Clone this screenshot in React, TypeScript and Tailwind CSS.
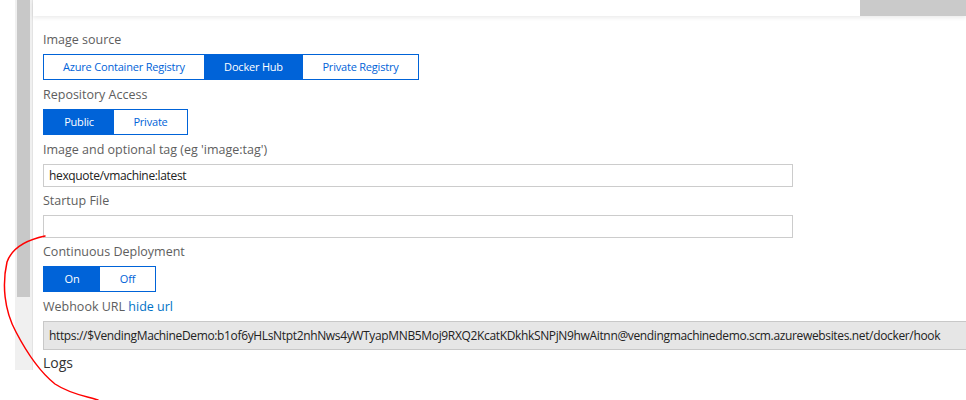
const font = "font-['Open_Sans','Noto_Sans',sans-serif]";

type Segment = { label: string; width: string; active?: boolean };

const imageSources: Segment[] = [
  { label: "Azure Container Registry", width: "w-[160px]" },
  { label: "Docker Hub", width: "w-[99px]", active: true },
  { label: "Private Registry", width: "w-[115px]" },
];

const accessOptions: Segment[] = [
  { label: "Public", width: "w-[70px]", active: true },
  { label: "Private", width: "w-[73px]" },
];

const deployOptions: Segment[] = [
  { label: "On", width: "w-[56px]", active: true },
  { label: "Off", width: "w-[55px]" },
];

const webhookUrl =
  "https://$VendingMachineDemo:b1of6yHLsNtpt2nhNws4yWTyapMNB5Moj9RXQ2KcatKDkhkSNPjN9hwAitnn@vendingmachinedemo.scm.azurewebsites.net/docker/hook";

function FieldLabel({ children }: { children: React.ReactNode }) {
  return <div className="h-[18px] text-[12.5px] leading-[18px] text-[#5e5e5e]">{children}</div>;
}

function SegmentGroup({ items }: { items: Segment[] }) {
  return (
    <div className="mt-[5px] flex h-[26px] w-fit border border-[#0063d8]">
      {items.map((item) => (
        <div
          key={item.label}
          className={`flex items-center justify-center text-[11px] tracking-[-0.2px] ${item.width} ${
            item.active ? "bg-[#0063d8] text-white" : "bg-white text-[#0063d8]"
          }`}
        >
          {item.label}
        </div>
      ))}
    </div>
  );
}

function TextBox({ value }: { value?: string }) {
  return (
    <div className="mt-[5px] flex h-[23px] w-[750px] items-center border border-[#cccccc] bg-white px-[5px] text-[12px] tracking-[-0.35px] text-[#222]">
      {value}
    </div>
  );
}

export default function App() {
  return (
    <div className={`relative h-[400px] w-[966px] overflow-hidden bg-white ${font}`}>
      <div className="flex h-[370px]">
        <div className="w-[15px] shrink-0" />
        <div className="w-[17px] shrink-0 bg-[#f0f0f0] px-[2px]">
          <div className="h-[297px] w-[13px] bg-[#c8c8c8]" />
        </div>
        <div className="flex min-w-0 flex-1 flex-col border-l border-[#e3e3e3]">
          <div className="flex h-[16px] shrink-0 shadow-[0_2px_4px_rgba(0,0,0,0.08)]">
            <div className="w-[827px] bg-white" />
            <div className="flex-1 bg-[#cacaca]" />
          </div>

          <div className="shrink-0 pl-[10px] pt-[15px]">
            <FieldLabel>Image source</FieldLabel>
            <SegmentGroup items={imageSources} />

            <div className="mt-[6px]">
              <FieldLabel>Repository Access</FieldLabel>
            </div>
            <SegmentGroup items={accessOptions} />

            <div className="mt-[6px]">
              <FieldLabel>Image and optional tag (eg 'image:tag')</FieldLabel>
            </div>
            <TextBox value="hexquote/vmachine:latest" />

            <div className="mt-[5px]">
              <FieldLabel>Startup File</FieldLabel>
            </div>
            <TextBox />

            <div className="mt-[5px]">
              <FieldLabel>Continuous Deployment</FieldLabel>
            </div>
            <SegmentGroup items={deployOptions} />

            <div className="mt-[6px]">
              <FieldLabel>
                Webhook URL <span className="text-[#0072c6]">hide url</span>
              </FieldLabel>
            </div>
            <div className="mt-[5px] flex h-[29px] items-center whitespace-nowrap border border-r-0 border-[#c8c8c8] bg-[#e6e6e6] pl-[5px] text-[12px] tracking-[-0.35px] text-[#222]">
              {webhookUrl}
            </div>

            <div className="mt-[3px] text-[14px] leading-[20px] text-[#333]">Logs</div>
          </div>
        </div>
      </div>

      <svg className="pointer-events-none absolute left-0 top-0" width="966" height="400" viewBox="0 0 966 400">
        <path
          d="M45 236 C 26 240, 12 248, 7 262 C 2 284, 4 310, 16 332 C 28 355, 40 372, 55 384 C 70 394, 85 396, 98 400"
          fill="none"
          stroke="#f00"
          strokeWidth="1.5"
          strokeLinecap="round"
        />
      </svg>
    </div>
  );
}
